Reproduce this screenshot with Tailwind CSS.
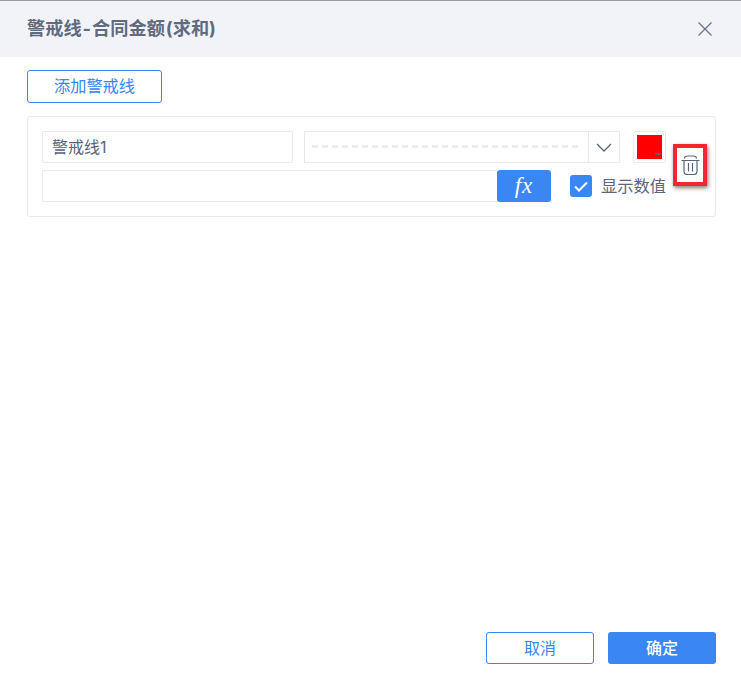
<!DOCTYPE html>
<html lang="zh-CN">

<head>
    <meta charset="UTF-8">
    <title>警戒线</title>
    <script src="https://cdn.jsdelivr.net/npm/@tailwindcss/browser@4"></script>
</head>

<body class="bg-white">
    <div class="w-[741px] h-[676px] flex flex-col overflow-hidden border-t border-[#9a9ca3] text-[#5b6579] font-['Inter','Noto_Sans_CJK_SC',sans-serif]">
        <!-- header -->
        <div class="h-[56px] shrink-0 bg-[#f1f3f8] flex items-center justify-between pl-[27px] pr-[28px]">
            <h1 class="text-[18.2px] font-bold text-[#5f6b7e]">警戒线<span class="mx-[1px]">-</span>合同金额<span class="mx-[1px]">(求和)</span></h1>
            <svg width="16" height="16" viewBox="0 0 16 16" fill="none" stroke="#6b7488" stroke-width="1.3">
                <path d="M1.5 1.5 14.5 14.5M14.5 1.5 1.5 14.5" />
            </svg>
        </div>

        <!-- body -->
        <div class="flex-1 flex flex-col pt-[13px] pl-[27px] pr-[25px]">
            <button class="w-[135px] h-[33px] rounded-[3px] border border-[#3a86f3] text-[#3a86f3] text-[16.2px]">添加警戒线</button>

            <div class="relative mt-[13px] h-[101px] border border-[#e8e9ee] rounded-[3px] pt-[14px] pl-[14px] flex flex-col gap-[7px]">
                <div class="flex h-[32px]">
                    <div class="w-[251px] border border-[#e8e9ee] rounded-[2px] flex items-center pl-[9px] text-[16px]">警戒线1</div>
                    <div class="ml-[11px] w-[316px] border border-[#e8e9ee] flex items-center">
                        <svg class="flex-1 ml-[7px] mr-[6px] -mt-[2px]" height="3">
                            <line x1="0" y1="1.5" x2="100%" y2="1.5" stroke="#e8e9ee" stroke-width="2.5" stroke-dasharray="6 4" />
                        </svg>
                        <div class="w-[31px] h-full border-l border-[#e8e9ee] flex items-center justify-center">
                            <svg width="16" height="9" viewBox="0 0 16 9" fill="none" stroke="#5b6579" stroke-width="1.3">
                                <path d="M1 1 8 8 15 1" />
                            </svg>
                        </div>
                    </div>
                    <div class="relative ml-[13px] w-[33px] border border-[#e8e9ee] rounded-[2px] p-[3px]">
                        <div class="h-full bg-[#ff0000]"></div>
                        <div class="absolute right-[3px] bottom-[6px] w-0 h-0 border-x-[4px] border-t-[3px] border-x-transparent border-t-[#5b6579]"></div>
                    </div>
                </div>
                <div class="flex h-[32px] items-stretch">
                    <div class="w-[455px] border border-[#e8e9ee] border-r-0 rounded-l-[2px]"></div>
                    <div class="w-[54px] bg-[#3a86f3] rounded-[3px] flex items-center justify-center text-white italic text-[23px] tracking-[1px] font-['Liberation_Serif',serif]">fx</div>
                    <div class="ml-[19px] flex items-center">
                        <div class="w-[22px] h-[22px] bg-[#3a86f3] rounded-[3px] flex items-center justify-center">
                            <svg width="14" height="11" viewBox="0 0 14 11" fill="none" stroke="#fff" stroke-width="2">
                                <path d="M1 5.5 5 9.5 13 1.5" />
                            </svg>
                        </div>
                        <span class="ml-[9px] text-[16.25px] whitespace-nowrap">显示数值</span>
                    </div>
                </div>

                <!-- highlighted delete icon -->
                <div class="absolute left-[645px] top-[27px] w-[34px] h-[42px] border-[4px] border-[#f5262f] shadow-[1px_2px_4px_rgba(0,0,0,0.5)] flex items-center justify-center bg-white">
                    <svg width="19" height="20" viewBox="0 0 19 20" fill="none" stroke="#5b6579" stroke-width="1.2">
                        <path d="M.5 5.5H18.5M3.5 3.5C3.5 1.5 5 1 6.5 1H12.5C14 1 15.5 1.5 15.5 3.5M3 5.5V16.5C3 18.5 4 19.5 6 19.5H13C15 19.5 16 18.5 16 16.5V5.5M7.5 8V16.5M11.5 8V16.5" />
                    </svg>
                </div>
            </div>

            <!-- footer -->
            <div class="mt-auto mb-[12px] flex justify-end gap-[14px]">
                <button class="w-[108px] h-[32px] rounded-[3px] border border-[#3a86f3] text-[#3a86f3] text-[16px]">取消</button>
                <button class="w-[108px] h-[32px] rounded-[3px] bg-[#3a86f3] text-white text-[16px] font-medium">确定</button>
            </div>
        </div>
    </div>
</body>

</html>
